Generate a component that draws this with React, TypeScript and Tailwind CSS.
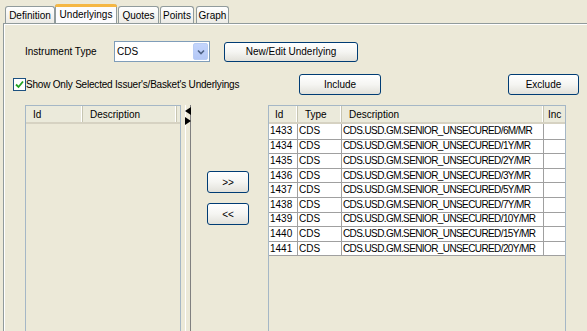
import React from 'react';

const rows = [
  { id: '1433', type: 'CDS', desc: 'CDS.USD.GM.SENIOR_UNSECURED/6M/MR' },
  { id: '1434', type: 'CDS', desc: 'CDS.USD.GM.SENIOR_UNSECURED/1Y/MR' },
  { id: '1435', type: 'CDS', desc: 'CDS.USD.GM.SENIOR_UNSECURED/2Y/MR' },
  { id: '1436', type: 'CDS', desc: 'CDS.USD.GM.SENIOR_UNSECURED/3Y/MR' },
  { id: '1437', type: 'CDS', desc: 'CDS.USD.GM.SENIOR_UNSECURED/5Y/MR' },
  { id: '1438', type: 'CDS', desc: 'CDS.USD.GM.SENIOR_UNSECURED/7Y/MR' },
  { id: '1439', type: 'CDS', desc: 'CDS.USD.GM.SENIOR_UNSECURED/10Y/MR' },
  { id: '1440', type: 'CDS', desc: 'CDS.USD.GM.SENIOR_UNSECURED/15Y/MR' },
  { id: '1441', type: 'CDS', desc: 'CDS.USD.GM.SENIOR_UNSECURED/20Y/MR' },
];

const XpButton = ({ label, className }: { label: string; className: string }) => (
  <div
    className={`flex items-center justify-center rounded-[3px] border border-[#003c74] bg-gradient-to-b from-white via-[#f5f5f2] to-[#e2e1da] text-black ${className}`}
  >
    {label}
  </div>
);

const Tab = ({ label, selected, className }: { label: string; selected?: boolean; className: string }) =>
  selected ? (
    <div
      className={`relative z-10 flex h-[19px] items-start justify-center rounded-t-[3px] border-x border-[#919b9c] bg-[#fcfcfe] pt-[3px] ${className}`}
    >
      <div className="absolute inset-x-[-1px] top-0 h-[3px] rounded-t-[3px] bg-[#f5b743]" />
      <span>{label}</span>
    </div>
  ) : (
    <div
      className={`flex h-[17px] items-center justify-center rounded-t-[3px] border-x border-t border-[#919b9c] bg-gradient-to-b from-white to-[#ecebe6] ${className}`}
    >
      {label}
    </div>
  );

const HeaderCell = ({ label, className }: { label: string; className: string }) => (
  <div className={`flex h-full items-center border-r border-[#c7c5b2] pl-[7px] shadow-[inset_-1px_0_0_#ffffff] ${className}`}>
    {label}
  </div>
);

export default function App() {
  return (
    <div
      className="h-[331px] w-[587px] overflow-hidden bg-[#ece9d8] text-[10px] text-black"
      style={{ fontFamily: '"Liberation Sans", Arial, sans-serif' }}
    >
      {/* tab strip */}
      <div className="flex h-[23px] items-end pl-[5px]">
        <Tab label="Definition" className="w-[50px]" />
        <Tab label="Underlyings" selected className="w-[62px]" />
        <Tab label="Quotes" className="ml-[1px] w-[41px]" />
        <Tab label="Points" className="ml-[1px] w-[34px]" />
        <Tab label="Graph" className="ml-[2px] w-[33px]" />
      </div>

      {/* panel */}
      <div className="ml-[3px] h-[308px] border-l border-t border-[#919b9c]">
        <div className="h-full border-l border-t border-white">
          {/* instrument row */}
          <div className="flex items-center pt-[16px]">
            <span className="ml-[20px] w-[89px]">Instrument Type</span>
            <div className="flex h-[21px] w-[96px] items-center border border-[#7f9db9] bg-white pl-[2px]">
              <span className="flex-1">CDS</span>
              <div className="mr-[1px] flex h-[17px] w-[15px] items-center justify-center rounded-[2px] border border-[#b9cdf5] bg-gradient-to-b from-[#c4d5fc] to-[#b4c8f6]">
                <svg width="8" height="6" viewBox="0 0 8 6">
                  <path d="M1 1.5 L4 4.5 L7 1.5" fill="none" stroke="#4d6185" strokeWidth="1.6" />
                </svg>
              </div>
            </div>
            <XpButton label="New/Edit Underlying" className="ml-[14px] h-[20px] w-[134px]" />
          </div>

          {/* filter row */}
          <div className="mt-[12px] flex items-center">
            <div className="ml-[8px] flex h-[13px] w-[13px] items-center justify-center border border-[#1c5180] bg-white">
              <svg width="9" height="9" viewBox="0 0 9 9">
                <path d="M1 4.5 L3.5 7 L8 1.5" fill="none" stroke="#21a121" strokeWidth="1.8" />
              </svg>
            </div>
            <span className="w-[273px] tracking-[-0.2px]">Show Only Selected Issuer's/Basket's Underlyings</span>
            <XpButton label="Include" className="h-[21px] w-[82px]" />
            <XpButton label="Exclude" className="ml-[127px] h-[21px] w-[71px]" />
          </div>

          {/* lists */}
          <div className="mt-[10px] flex h-[230px]">
            {/* left list */}
            <div className="ml-[20px] w-[156px] border border-[#a5b7c6]">
              <div className="flex h-[18px] border-b-[2px] border-[#d6d2c2] bg-[#ebeadb]">
                <HeaderCell label="Id" className="w-[57px]" />
                <HeaderCell label="Description" className="w-[94px]" />
              </div>
            </div>

            {/* splitter */}
            <div className="relative flex w-[10px] justify-end">
              <div className="mr-[4px] w-[1px] bg-white" />
              <div className="w-[1px] bg-[#808080]" />
              <div className="absolute left-[4px] top-[2px] flex flex-col gap-[2px]">
                <svg width="6" height="8" viewBox="0 0 6 8">
                  <path d="M6 0 L0 4 L6 8 Z" fill="#000" />
                </svg>
                <svg width="6" height="8" viewBox="0 0 6 8">
                  <path d="M0 0 L6 4 L0 8 Z" fill="#000" />
                </svg>
              </div>
            </div>

            {/* move buttons */}
            <div className="flex w-[77px] flex-col items-center pr-[3px] pt-[66px]">
              <XpButton label=">>" className="h-[22px] w-[42px]" />
              <XpButton label="<<" className="mt-[10px] h-[22px] w-[42px]" />
            </div>

            {/* right list */}
            <div className="w-[298px] border border-[#a5b7c6]">
              <div className="flex h-[18px] border-b-[2px] border-[#d6d2c2] bg-[#ebeadb]">
                <HeaderCell label="Id" className="w-[29px] !pl-[6px]" />
                <HeaderCell label="Type" className="w-[44px]" />
                <HeaderCell label="Description" className="w-[202px]" />
                <div className="flex items-center pl-[4px]">Inc</div>
              </div>
              <div className="border-b border-[#a0a0a0]">
                {rows.map((r) => (
                  <div key={r.id} className="flex h-[14.6px] border-t border-[#a0a0a0] bg-white leading-none first:border-t-0">
                    <div className="flex w-[29px] items-center border-r border-[#a0a0a0] pl-[1px]">{r.id}</div>
                    <div className="flex w-[44px] items-center border-r border-[#a0a0a0] pl-[1px]">{r.type}</div>
                    <div className="flex w-[202px] items-center border-r border-[#a0a0a0] pl-[1px] tracking-[-0.6px]">{r.desc}</div>
                    <div className="flex-1" />
                  </div>
                ))}
              </div>
            </div>
          </div>
        </div>
      </div>
    </div>
  );
}
